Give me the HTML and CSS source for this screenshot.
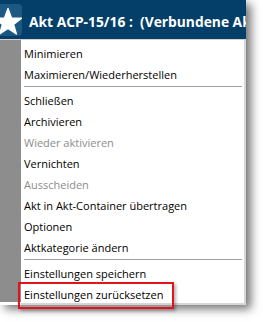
FILE: index.html
```
<!DOCTYPE html>
<html lang="de">
<head>
<meta charset="utf-8">
<link rel="stylesheet" href="styles.css">
</head>
<body>
<div class="shot">
  <div class="window">
    <div class="titlebar">
      <div class="starbox">
        <svg class="star" width="30" height="32" viewBox="0 0 30 32">
          <polygon points="8,4.5 11.5,14 21.5,14.2 13.6,20.4 16.4,30 8,24.3 -0.4,30 2.4,20.4 -5.5,14.2 4.5,14" fill="#fff" stroke="#fff" stroke-width="1.4" stroke-linejoin="round"/>
        </svg>
      </div>
      <div class="title">Akt ACP-15/16 :&nbsp; (Verbundene Akte)</div>
    </div>
    <div class="body">
      <div class="strip"></div>
      <ul class="menu">
        <li class="item">Minimieren</li>
        <li class="item">Maximieren/Wiederherstellen</li>
        <li class="sep"></li>
        <li class="item">Schließen</li>
        <li class="item">Archivieren</li>
        <li class="item disabled">Wieder aktivieren</li>
        <li class="item">Vernichten</li>
        <li class="item disabled">Ausscheiden</li>
        <li class="item">Akt in Akt-Container übertragen</li>
        <li class="item">Optionen</li>
        <li class="item">Aktkategorie ändern</li>
        <li class="sep"></li>
        <li class="item">Einstellungen speichern</li>
        <li class="item">Einstellungen zurücksetzen</li>
      </ul>
    </div>
  </div>
  <div class="highlight"></div>
</div>
</body>
</html>
```
FILE: styles.css
```
html, body {
  margin: 0;
  padding: 0;
  background: #fff;
}
body {
  width: 263px;
  height: 322px;
  overflow: hidden;
  font-family: "Open Sans", "Noto Sans", sans-serif;
}
.shot {
  position: relative;
  width: 263px;
  height: 322px;
}
.window {
  width: 246px;
  box-shadow: 5px 4px 9px rgba(0, 0, 0, 0.55);
  background: #fff;
}
.titlebar {
  height: 39px;
  background: #033f69;
  border-bottom: 1px solid #d2d2d2;
  display: flex;
  align-items: center;
  overflow: hidden;
}
.starbox {
  flex: none;
  width: 22px;
  height: 32px;
  background: #1d5883;
  border-radius: 0 4px 4px 0;
  overflow: hidden;
}
.star {
  display: block;
}
.title {
  margin-left: 7px;
  padding-top: 3px;
  color: #fff;
  font-weight: 700;
  font-size: 13.8px;
  white-space: nowrap;
}
.body {
  display: flex;
  height: 265px;
}
.strip {
  flex: none;
  width: 21px;
  height: 262px;
  background: #8d8d8d;
}
.menu {
  flex: 1;
  margin: 0;
  padding: 3px 0 0 0;
  list-style: none;
  background: #fff;
  border-right: 2px solid #d6d6d6;
  border-bottom: 2px solid #d6d6d6;
  font-size: 11px;
  color: #000;
}
.item {
  height: 21px;
  line-height: 21px;
  padding-left: 3px;
  white-space: nowrap;
}
.item.disabled {
  color: #8c8c8c;
}
.sep {
  height: 0;
  margin: 1px 2px 3px 3px;
  border-top: 1px solid #a0a0a0;
}
.highlight {
  position: absolute;
  left: 18px;
  top: 282px;
  width: 156px;
  height: 27px;
  box-sizing: border-box;
  border: 2px solid #e3131b;
  box-shadow: 2px 2px 3px rgba(0, 0, 0, 0.3);
}
```
